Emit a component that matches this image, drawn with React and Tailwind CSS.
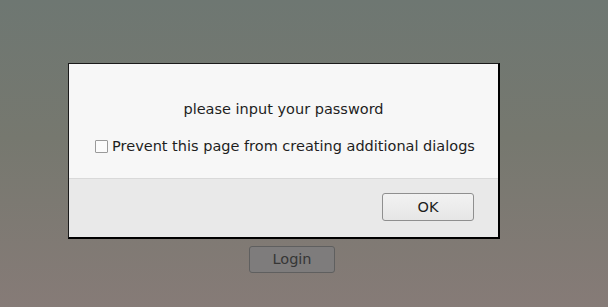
export default function App() {
  return (
    <div
      className="relative w-full h-[307px] overflow-hidden bg-[linear-gradient(180deg,#6e7772_0%,#76786f_45%,#867b77_100%)]"
      style={{ fontFamily: '"DejaVu Sans", sans-serif' }}
    >
      <div className="flex justify-center pt-[246px]">
        <button className="w-[86px] h-[27px] ml-[-24px] rounded-[3px] border border-[#5f5f5f] bg-[#7e7c7c] text-[#363636] text-[14.5px] leading-none">
          Login
        </button>
      </div>

      <div className="absolute left-[68px] top-[63px] w-[432px] h-[176px] border border-[#1a1a1a] border-r-black border-b-black border-r-[2px] border-b-[2px] bg-[#f7f7f7] flex flex-col">
        <div className="h-[115px] flex flex-col items-center pt-[36px] border-b border-[#d9d9d9]">
          <div className="text-[14.5px] text-[#1e1e1e] leading-[18px]">please input your password</div>
          <label className="mt-[19px] ml-[3px] flex items-center gap-[4px] text-[14.5px] text-[#1e1e1e] leading-[18px]">
            <span className="w-[13px] h-[13px] border border-[#9a9a9a] bg-[#fbfbfb] rounded-[1px] inline-block" />
            Prevent this page from creating additional dialogs
          </label>
        </div>
        <div className="flex-1 bg-[#e9e9e9] flex justify-end items-start pt-[14px] pr-[24px]">
          <button className="w-[92px] h-[28px] rounded-[3px] border border-[#8f8f8f] bg-[linear-gradient(180deg,#f2f2f2,#e6e6e6)] text-[14.5px] text-[#1e1e1e] leading-none">
            OK
          </button>
        </div>
      </div>
    </div>
  );
}
